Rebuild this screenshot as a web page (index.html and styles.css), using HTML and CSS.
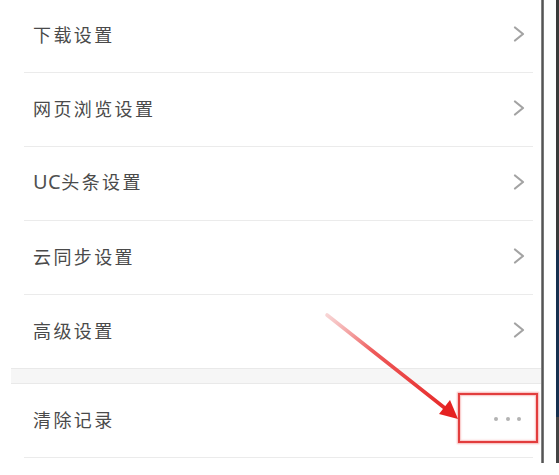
FILE: index.html
```html
<!DOCTYPE html>
<html lang="zh-CN">
<head>
<meta charset="utf-8">
<title>设置</title>
<link rel="stylesheet" href="styles.css">
</head>
<body>
<div class="screen">
  <div class="panel">
    <ul class="list">
      <li class="row"><span class="label">下载设置</span><svg class="chev" viewBox="0 0 12 16"><path d="M2 1.5 L10 8 L2 14.5"/></svg></li>
      <li class="row"><span class="label">网页浏览设置</span><svg class="chev" viewBox="0 0 12 16"><path d="M2 1.5 L10 8 L2 14.5"/></svg></li>
      <li class="row"><span class="label"><span class="latin">UC</span>头条设置</span><svg class="chev" viewBox="0 0 12 16"><path d="M2 1.5 L10 8 L2 14.5"/></svg></li>
      <li class="row"><span class="label">云同步设置</span><svg class="chev" viewBox="0 0 12 16"><path d="M2 1.5 L10 8 L2 14.5"/></svg></li>
      <li class="row row-last"><span class="label">高级设置</span><svg class="chev" viewBox="0 0 12 16"><path d="M2 1.5 L10 8 L2 14.5"/></svg></li>
    </ul>
    <div class="gap"></div>
    <ul class="list">
      <li class="row"><span class="label">清除记录</span><span class="dots"><i></i><i></i><i></i></span></li>
    </ul>
  </div>
  <div class="edge"></div>
  <div class="spacer"></div>
  <div class="strip"><div class="s1"></div><div class="s2"></div><div class="s3"></div></div>

  <div class="highlight"></div>
  <svg class="arrow" viewBox="0 0 559 475" width="559" height="475">
    <defs>
      <linearGradient id="ag" x1="327" y1="315" x2="458" y2="419" gradientUnits="userSpaceOnUse">
        <stop offset="0" stop-color="#f3b8b8" stop-opacity="0.6"/>
        <stop offset="0.35" stop-color="#ee5a5a"/>
        <stop offset="1" stop-color="#e52222"/>
      </linearGradient>
    </defs>
    <line x1="327" y1="315" x2="446" y2="409" stroke="url(#ag)" stroke-width="3.6" stroke-linecap="round"/>
    <polygon points="458,419 439,414 450,400" fill="#e52222"/>
  </svg>
</div>
</body>
</html>
```

FILE: styles.css
```css
html, body {
  margin: 0;
  padding: 0;
  background: #ffffff;
}

.screen {
  position: relative;
  width: 559px;
  height: 475px;
  display: flex;
  align-items: flex-start;
  overflow: hidden;
  font-family: "Noto Sans CJK SC", "Noto Sans", sans-serif;
}

.panel {
  margin-left: 11px;
  width: 530px;
  height: 463px;
  background: #ffffff;
  overflow: hidden;
}

.list {
  list-style: none;
  margin: -1px 0 0 0;
  padding: 0;
}

.gap + .list {
  margin-top: 0;
}

.row {
  height: 73px;
  box-sizing: border-box;
  display: flex;
  align-items: center;
  justify-content: space-between;
  padding: 0 16px 4px 22px;
  position: relative;
}

.row::after {
  content: "";
  position: absolute;
  left: 13px;
  right: 8px;
  bottom: -1px;
  height: 1px;
  background: #ebebeb;
}

.row + .row {
  margin-top: 1px;
}

.row-last::after {
  display: none;
}

.label {
  font-size: 18px;
  letter-spacing: 2.4px;
  color: #4a4a4a;
  line-height: 1;
}

.latin {
  font-family: "Noto Sans", "Open Sans", sans-serif;
  font-size: 20px;
  letter-spacing: 0.5px;
  color: #505050;
}

.chev {
  width: 12px;
  height: 16px;
  fill: none;
  stroke: #a3a3a3;
  stroke-width: 2.2;
  stroke-linecap: round;
  stroke-linejoin: round;
}

.gap {
  height: 14px;
  background: #f6f6f6;
  border-top: 1px solid #e9e9e9;
  border-bottom: 1px solid #e9e9e9;
}

.dots {
  display: flex;
  gap: 7.5px;
  margin-right: 4px;
}

.dots i {
  width: 4px;
  height: 4px;
  border-radius: 50%;
  background: #b3b3b3;
}

.edge {
  width: 3px;
  height: 463px;
  background: linear-gradient(to right, #9a9a9a, #555555 50%, #8a8a8a);
}

.spacer {
  width: 12px;
  height: 463px;
  background: #ffffff;
}

.strip {
  width: 3px;
  height: 463px;
  display: flex;
  flex-direction: column;
}

.s1 { height: 250px; background: #3a3a3a; }
.s2 { height: 167px; background: #17304f; }
.s3 { height: 46px; background: #444444; }

.highlight {
  position: absolute;
  left: 458px;
  top: 393px;
  width: 76px;
  height: 46px;
  border: 2px solid #e23d3d;
  box-shadow: 0 0 1.5px 1px rgba(240, 120, 120, 0.55), inset 0 0 1.5px 1px rgba(240, 120, 120, 0.45);
}

.arrow {
  position: absolute;
  left: 0;
  top: 0;
  pointer-events: none;
}
```
